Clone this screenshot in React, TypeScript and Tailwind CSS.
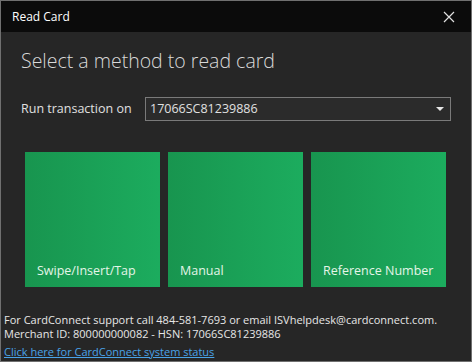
import React from "react";

const tiles = ["Swipe/Insert/Tap", "Manual", "Reference Number"];

const App = () => {
  return (
    <div
      className="w-[472px] h-[362px] flex flex-col border border-[#707070] bg-[#262626] text-[#e6e6e6] overflow-hidden"
      style={{ fontFamily: '"Open Sans", "Noto Sans", sans-serif' }}
    >
      {/* title bar */}
      <div className="h-[31px] shrink-0 bg-[#0b0b0b] flex items-center justify-between pl-[11px] pr-[16px]">
        <span className="text-[12px] text-white">Read Card</span>
        <svg width="12" height="12" viewBox="0 0 12 12" className="text-[#e0e0e0]">
          <path d="M1 1 L11 11 M11 1 L1 11" stroke="currentColor" strokeWidth="1.2" />
        </svg>
      </div>

      <div className="flex-1 flex flex-col">
        <h1 className="pl-[20px] pt-[16px] text-[19.5px] leading-[26px] text-[#d9d9d9] font-light">
          Select a method to read card
        </h1>

        <div className="flex items-center pl-[20px] pr-[20px] mt-[23px]">
          <span className="text-[12.5px] w-[124px] text-[#e0e0e0]">Run transaction on</span>
          <div className="flex-1 h-[24px] border border-[#7a7a7a] bg-[#2b2b2b] flex items-center justify-between pl-[4px] pr-[6px]">
            <span className="text-[12.5px] text-[#e0e0e0]">17066SC81239886</span>
            <svg width="8" height="5" viewBox="0 0 8 5">
              <path d="M0 0 L8 0 L4 4 Z" fill="#e6e6e6" />
            </svg>
          </div>
        </div>

        <div className="flex gap-[8px] pl-[24px] mt-[31px]">
          {tiles.map((t) => (
            <div
              key={t}
              className="w-[135px] h-[135px] bg-gradient-to-r from-[#18954f] to-[#1cac5e] flex items-end pl-[12px] pb-[6px]"
            >
              <span className="text-[12.5px] text-[#e4f5e8]">{t}</span>
            </div>
          ))}
        </div>

        <div className="mt-auto pl-[3px] pb-[2px] text-[11px] leading-[14px] text-[#e6e6e6]">
          <div>For CardConnect support call 484-581-7693 or email ISVhelpdesk@cardconnect.com.</div>
          <div>Merchant ID: 800000000082 - HSN: 17066SC81239886</div>
          <a href="#" className="block mt-[4px] underline text-[#4aa3e8]">
            Click here for CardConnect system status
          </a>
        </div>
      </div>
    </div>
  );
};

export default App;
